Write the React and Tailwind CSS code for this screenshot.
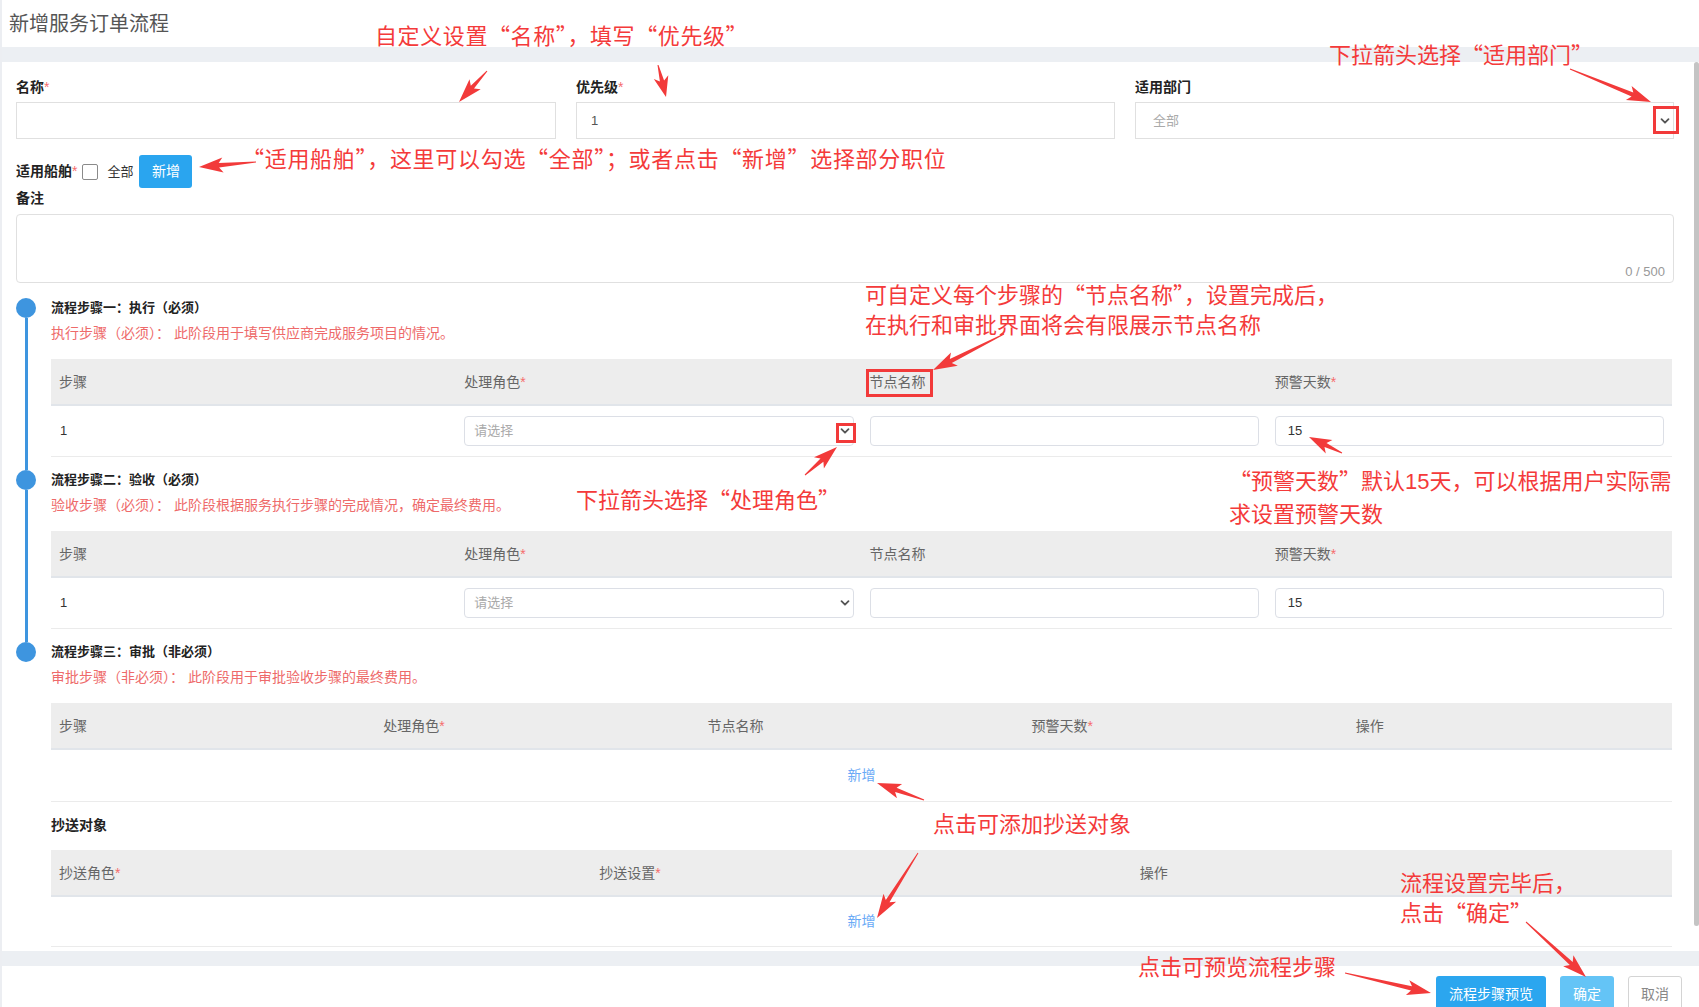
import React from "react";

const RED = "#f23a3a";

// tail -> tip, page coordinates
const ARROWS = [
  [485, 71, 457, 102],
  [656, 65, 664, 97],
  [1568, 69, 1649, 102],
  [254, 162, 197, 167],
  [1002, 334, 931, 370],
  [803, 475, 835, 447],
  [1340, 453, 1307, 437],
  [922, 800, 875, 783],
  [916, 853, 875, 918],
  [1524, 922, 1584, 977],
  [1343, 973, 1429, 993],
];

const arrowPoints = ([x1, y1, x2, y2]) => {
  const dx = x2 - x1;
  const dy = y2 - y1;
  const len = Math.hypot(dx, dy);
  const ux = dx / len;
  const uy = dy / len;
  const nx = -uy;
  const ny = ux;
  const head = Math.min(20, len * 0.5);
  const bx = x2 - ux * head;
  const by = y2 - uy * head;
  const wx = x2 - ux * (head + 4);
  const wy = y2 - uy * (head + 4);
  const pts = [
    [x1 + nx * 0.5, y1 + ny * 0.5],
    [bx + nx * 2.2, by + ny * 2.2],
    [wx + nx * 7.5, wy + ny * 7.5],
    [x2, y2],
    [wx - nx * 7.5, wy - ny * 7.5],
    [bx - nx * 2.2, by - ny * 2.2],
    [x1 - nx * 0.5, y1 - ny * 0.5],
  ];
  return pts.map((p) => p.map((v) => v.toFixed(1)).join(",")).join(" ");
};

const Chevron = () => (
  <svg width="10" height="10" viewBox="0 0 10 10" className="text-[#555] shrink-0">
    <path
      d="M1.5 3.2 L5 6.7 L8.5 3.2"
      fill="none"
      stroke="currentColor"
      strokeWidth="1.8"
      strokeLinecap="round"
      strokeLinejoin="round"
    />
  </svg>
);

const Star = () => <span className="text-[#f56c6c] font-normal">*</span>;

const Field = ({ label, required, children }) => (
  <div>
    <div className="h-[18px] leading-[18px] text-[14px] font-bold text-[#222]">
      {label}
      {required && <Star />}
    </div>
    <div className="mt-[6px]">{children}</div>
  </div>
);

const TableHead = ({ cols, grid }) => (
  <div className={`grid ${grid} h-[47px] items-center bg-[#ededed] border-b-2 border-[#e1e5ea]`}>
    {cols.map(([text, req]) => (
      <div key={text} className="pl-[8px] text-[14px] text-[#666] leading-[20px]">
        {text}
        {req && <Star />}
      </div>
    ))}
  </div>
);

const StepRow = () => (
  <div className="grid grid-cols-4 h-[51px] items-center border-b border-[#ebebeb]">
    <div className="pl-[9px] text-[13px] text-[#333]">1</div>
    <div className="px-[8px]">
      <div className="h-[30px] rounded-[4px] border border-[#dcdfe6] flex items-center justify-between pl-[9px] pr-[3px]">
        <span className="text-[13px] text-[#aaa]">请选择</span>
        <Chevron />
      </div>
    </div>
    <div className="px-[8px]">
      <div className="h-[30px] rounded-[4px] border border-[#dcdfe6]" />
    </div>
    <div className="px-[8px]">
      <div className="h-[30px] rounded-[4px] border border-[#dcdfe6] flex items-center pl-[12px] text-[13px] text-[#333]">
        15
      </div>
    </div>
  </div>
);

const AddRow = ({ h }) => (
  <div className={`${h} flex items-center justify-center border-b border-[#ebebeb]`}>
    <span className="text-[14px] text-[#6aaaf6]">新增</span>
  </div>
);

const STEP_COLS = [
  ["步骤"],
  ["处理角色", true],
  ["节点名称"],
  ["预警天数", true],
];

const Step = ({ title, desc, last, children }) => (
  <div className="flex">
    <div className="w-[35px] shrink-0 flex flex-col">
      <div className="w-[20px] h-[20px] rounded-full bg-[#3e95df]" />
      {!last && <div className="ml-[8.5px] w-[3px] flex-1 bg-[#3e95df]" />}
    </div>
    <div className={`flex-1 min-w-0 mr-[2px] ${last ? "" : "pb-[13px]"}`}>
      <div className="h-[20px] leading-[20px] text-[13px] font-bold text-[#222]">{title}</div>
      <div className="mt-[5px] h-[20px] leading-[20px] text-[14px] text-[#ee6a6a]">{desc}</div>
      <div className="mt-[16px]">{children}</div>
    </div>
  </div>
);

// annotation text: CJK font first so the curly quotes come out full width
const Note = ({ className, children }) => (
  <div
    className={`absolute whitespace-nowrap text-[22px] leading-[30px] text-[#f43a3a] font-['Noto_Sans_CJK_SC',sans-serif] [font-feature-settings:'fwid'] ${className}`}
  >
    {children}
  </div>
);

const Num = ({ children }) => (
  <span className="font-['Liberation_Sans',sans-serif] [font-feature-settings:normal]">{children}</span>
);

export default function App() {
  return (
    <div className="relative w-[1699px] h-[1007px] overflow-hidden bg-white border-l-2 border-[#eceef2] text-[#333] font-['Liberation_Sans','Noto_Sans_CJK_SC',sans-serif]">
      <div className="h-[47px] flex items-center pl-[7px] text-[20px] text-[#555] leading-none">
        新增服务订单流程
      </div>
      <div className="h-[15px] bg-[#eceff3]" />

      <div className="h-[889px] flex">
        <div className="w-[1672px] pl-[14px] pt-[16px]">
          <div className="grid grid-cols-[540px_539px_539px] gap-x-[20px]">
            <Field label="名称" required>
              <div className="h-[37px] border border-[#e0e0e0]" />
            </Field>
            <Field label="优先级" required>
              <div className="h-[37px] border border-[#e0e0e0] flex items-center pl-[14px] text-[13px] text-[#555]">
                1
              </div>
            </Field>
            <Field label="适用部门">
              <div className="h-[37px] border border-[#e0e0e0] flex items-center justify-between pl-[17px] pr-[3px]">
                <span className="text-[13px] text-[#aaa]">全部</span>
                <Chevron />
              </div>
            </Field>
          </div>

          <div className="mt-[16px] h-[33px] flex items-center">
            <span className="text-[14px] font-bold text-[#222]">
              适用船舶
              <Star />
            </span>
            <span className="ml-[5px] w-[16px] h-[16px] rounded-[2px] border border-[#8a8a8a] bg-white" />
            <span className="ml-[9px] text-[13px] text-[#333]">全部</span>
            <button className="ml-[6px] w-[53px] h-[33px] rounded-[3px] bg-[#2aa5ef] text-white text-[14px]">
              新增
            </button>
          </div>

          <div className="mt-[1px] h-[18px] leading-[18px] text-[14px] font-bold text-[#222]">备注</div>
          <div className="mt-[7px] h-[69px] rounded-[4px] border border-[#e0e0e0] flex items-end justify-end pr-[8px] pb-[1px]">
            <span className="text-[13px] text-[#999]">0 / 500</span>
          </div>

          <div className="mt-[15px]">
            <Step title="流程步骤一：执行（必须）" desc="执行步骤（必须）： 此阶段用于填写供应商完成服务项目的情况。">
              <TableHead grid="grid-cols-4" cols={STEP_COLS} />
              <StepRow />
            </Step>
            <Step title="流程步骤二：验收（必须）" desc="验收步骤（必须）： 此阶段根据服务执行步骤的完成情况，确定最终费用。">
              <TableHead grid="grid-cols-4" cols={STEP_COLS} />
              <StepRow />
            </Step>
            <Step last title="流程步骤三：审批（非必须）" desc="审批步骤（非必须）： 此阶段用于审批验收步骤的最终费用。">
              <TableHead
                grid="grid-cols-5"
                cols={[["步骤"], ["处理角色", true], ["节点名称"], ["预警天数", true], ["操作"]]}
              />
              <AddRow h="h-[52px]" />
            </Step>
          </div>

          <div className="pl-[35px] mr-[2px]">
            <div className="mt-[13px] h-[20px] leading-[20px] text-[14px] font-bold text-[#222]">抄送对象</div>
            <div className="mt-[15px]">
              <TableHead grid="grid-cols-3" cols={[["抄送角色", true], ["抄送设置", true], ["操作"]]} />
              <AddRow h="h-[50px]" />
            </div>
          </div>
        </div>
        <div className="flex-1 flex justify-end">
          <div className="w-[5px] h-[864px] rounded-full bg-[#c4c4c4]" />
        </div>
      </div>

      <div className="h-[15px] bg-[#eceff3]" />
      <div className="flex justify-end gap-[14px] pt-[10px] pr-[17px]">
        <button className="w-[110px] h-[36px] rounded-[3px] bg-[#2ba6ef] text-white text-[14px]">流程步骤预览</button>
        <button className="w-[54px] h-[36px] rounded-[3px] bg-[#64c4f6] text-white text-[14px]">确定</button>
        <button className="w-[54px] h-[36px] rounded-[3px] border border-[#d4d4d4] bg-white text-[#888] text-[14px]">
          取消
        </button>
      </div>

      {/* annotations */}
      <div className="absolute left-[1651px] top-[106px] w-[26px] h-[28px] border-[3px] border-[#f23a3a]" />
      <div className="absolute left-[864px] top-[369px] w-[67px] h-[28px] border-[3px] border-[#f23a3a]" />
      <div className="absolute left-[834px] top-[423px] w-[20px] h-[20px] border-[3px] border-[#f23a3a]" />

      <Note className="left-[373px] top-[19px] tracking-[0.6px]">自定义设置“名称”，填写“优先级”</Note>
      <Note className="left-[1327px] top-[38px]">下拉箭头选择“适用部门”</Note>
      <Note className="left-[240px] top-[142px] tracking-[0.7px]">
        “适用船舶”，这里可以勾选“全部”；或者点击“新增”选择部分职位
      </Note>
      <Note className="left-[863px] top-[278px]">
        <div>可自定义每个步骤的“节点名称”，设置完成后，</div>
        <div>在执行和审批界面将会有限展示节点名称</div>
      </Note>
      <Note className="left-[574px] top-[483px]">下拉箭头选择“处理角色”</Note>
      <Note className="left-[1227px] top-[464px]">
        <div>
          “预警天数”默认<Num>15</Num>天，可以根据用户实际需
        </div>
        <div>求设置预警天数</div>
      </Note>
      <Note className="left-[931px] top-[807px]">点击可添加抄送对象</Note>
      <Note className="left-[1398px] top-[866px]">
        <div>流程设置完毕后，</div>
        <div>点击“确定”</div>
      </Note>
      <Note className="left-[1136px] top-[950px]">点击可预览流程步骤</Note>

      <svg className="absolute left-0 top-0 pointer-events-none" width="1699" height="1007">
        {ARROWS.map((a, i) => (
          <polygon key={i} points={arrowPoints(a)} fill={RED} />
        ))}
      </svg>
    </div>
  );
}
